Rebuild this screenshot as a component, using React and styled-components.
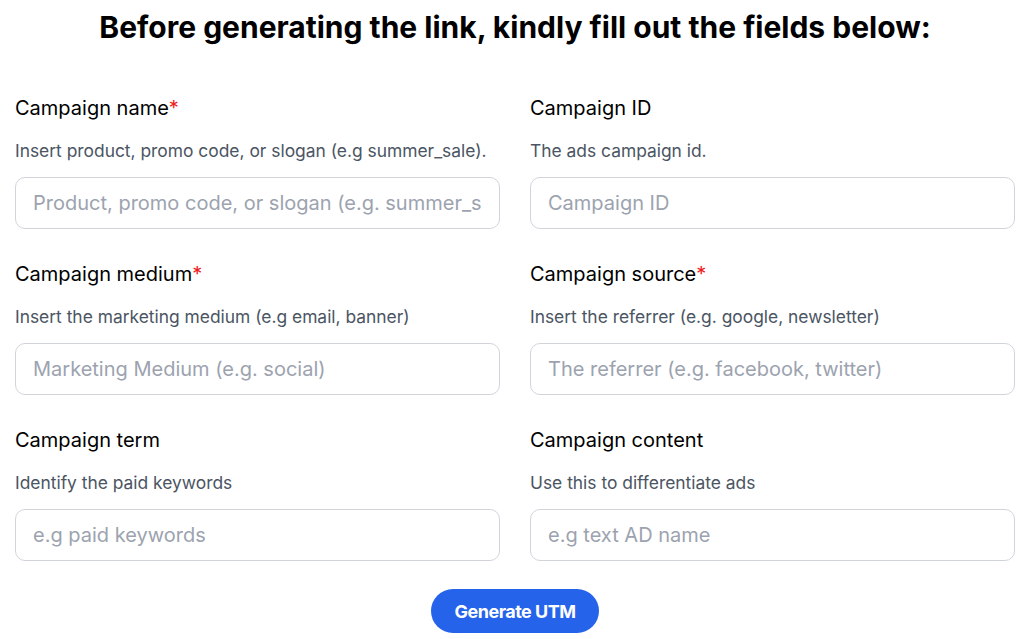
import React from 'react';
import styled, { createGlobalStyle } from 'styled-components';

const GlobalStyle = createGlobalStyle`
  body {
    margin: 0;
    background: #fff;
    font-family: Inter, "Noto Sans", sans-serif;
  }
  * { box-sizing: border-box; }
`

const Page = styled.div`
  padding: 0 10px 0 15px;
`

const Heading = styled.h1`
  margin: 7px 0 0;
  font-size: 30px;
  line-height: 40px;
  font-weight: 700;
  text-align: center;
  color: #000;
`

const FieldGrid = styled.div`
  margin-top: 47px;
  display: grid;
  grid-template-columns: 1fr 1fr;
  column-gap: 30px;
  row-gap: 31px;
`

const Field = styled.div`
  display: flex;
  flex-direction: column;
`

const Label = styled.label`
  font-size: 20px;
  line-height: 28px;
  font-weight: 400;
  color: #000;
`

const Required = styled.span`
  color: #ef1c1c;
`

const Hint = styled.p`
  margin: 17px 0 0;
  font-size: 17.4px;
  line-height: 24px;
  color: #4b5563;
`

const Input = styled.input`
  margin-top: 14px;
  height: 52px;
  width: 100%;
  padding: 0 17px;
  border: 1px solid #d1d5db;
  border-radius: 10px;
  font-family: Inter, "Noto Sans", sans-serif;
  font-size: 20px;
  color: #111;
  outline: none;
  &::placeholder {
    color: #9ca3af;
  }
`

const Actions = styled.div`
  display: flex;
  justify-content: center;
  margin-top: 28px;
`

const Button = styled.button`
  height: 44px;
  width: 168px;
  padding: 0;
  border: none;
  border-radius: 22px;
  background: #2563eb;
  color: #fff;
  font-family: Inter, "Noto Sans", sans-serif;
  font-size: 18px;
  font-weight: 700;
  letter-spacing: -0.5px;
  cursor: pointer;
`

const fields = [
  { label: 'Campaign name', required: true, hint: 'Insert product, promo code, or slogan (e.g summer_sale).', placeholder: 'Product, promo code, or slogan (e.g. summer_sale)' },
  { label: 'Campaign ID', hint: 'The ads campaign id.', placeholder: 'Campaign ID' },
  { label: 'Campaign medium', required: true, hint: 'Insert the marketing medium (e.g email, banner)', placeholder: 'Marketing Medium (e.g. social)' },
  { label: 'Campaign source', required: true, hint: 'Insert the referrer (e.g. google, newsletter)', placeholder: 'The referrer (e.g. facebook, twitter)' },
  { label: 'Campaign term', hint: 'Identify the paid keywords', placeholder: 'e.g paid keywords' },
  { label: 'Campaign content', hint: 'Use this to differentiate ads', placeholder: 'e.g text AD name' },
];

export default function App() {
  return (
    <Page>
      <GlobalStyle />
      <Heading>Before generating the link, kindly fill out the fields below:</Heading>
      <FieldGrid>
        {fields.map((f) => (
          <Field key={f.label}>
            <Label>
              {f.label}
              {f.required && <Required>*</Required>}
            </Label>
            <Hint>{f.hint}</Hint>
            <Input placeholder={f.placeholder} />
          </Field>
        ))}
      </FieldGrid>
      <Actions>
        <Button>Generate UTM</Button>
      </Actions>
    </Page>
  );
}
